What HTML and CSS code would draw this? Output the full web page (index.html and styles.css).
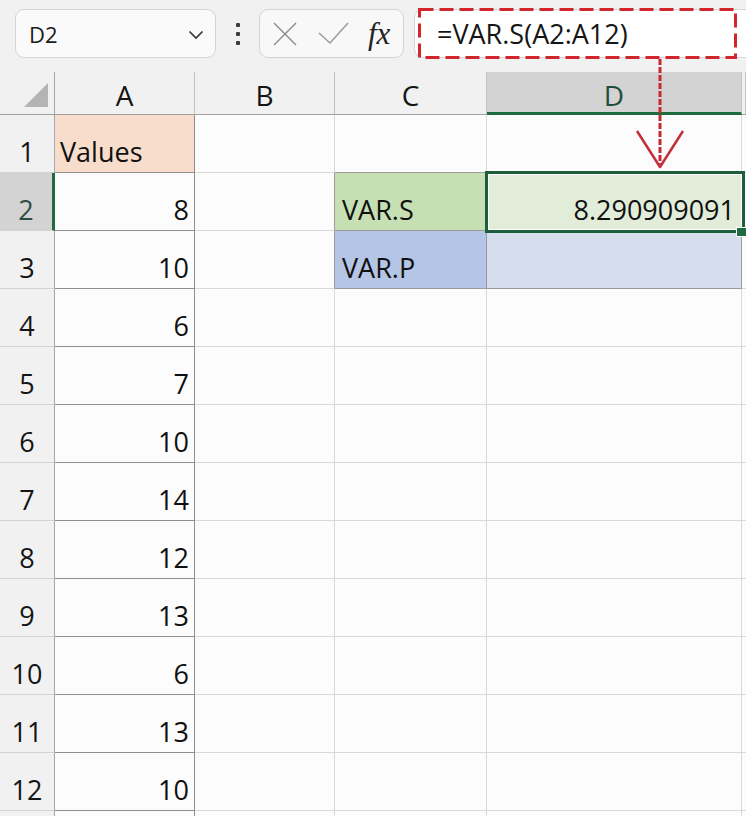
FILE: index.html
```html
<!DOCTYPE html>
<html>
<head>
<meta charset="utf-8">
<link rel="stylesheet" href="styles.css">
</head>
<body>
<div class="page">
  <div class="toolbar">
    <div class="namebox">
      <span class="name">D2</span>
      <svg class="chev" width="16" height="10" viewBox="0 0 16 10"><path d="M1.5 1.5 L8 8 L14.5 1.5" fill="none" stroke="#333" stroke-width="1.6"/></svg>
    </div>
    <div class="dots"><i></i><i></i><i></i></div>
    <div class="fxbox">
      <svg class="ico-x" width="24" height="24" viewBox="0 0 24 24"><path d="M1 1 L23 23 M23 1 L1 23" stroke="#8a8a8a" stroke-width="1.4" fill="none"/></svg>
      <svg class="ico-ok" width="31" height="22" viewBox="0 0 31 22"><path d="M1 11 L12 21 L30 1" stroke="#9a9a9a" stroke-width="1.4" fill="none"/></svg>
      <span class="fx">fx</span>
    </div>
    <div class="formula">=VAR.S(A2:A12)</div>
  </div>

  <div class="sheet">
    <div class="corner"><span class="tri"></span></div>
    <div class="ch">A</div>
    <div class="ch">B</div>
    <div class="ch">C</div>
    <div class="ch sel-h">D</div>
    <div class="ch"></div>

    <div class="rh">1</div>
    <div class="c a fill-peach">Values</div>
    <div class="c"></div>
    <div class="c dark-b"></div>
    <div class="c dark-b"></div>
    <div class="c"></div>

    <div class="rh sel-r">2</div>
    <div class="c a num">8</div>
    <div class="c dark-r"></div>
    <div class="c bx fill-green">VAR.S</div>
    <div class="c bx num fill-lgreen active">8.290909091<span class="selbox"></span><span class="handle"></span></div>
    <div class="c"></div>

    <div class="rh">3</div>
    <div class="c a num">10</div>
    <div class="c dark-r"></div>
    <div class="c bx fill-blue">VAR.P</div>
    <div class="c bx fill-lblue"></div>
    <div class="c"></div>

    <div class="rh">4</div><div class="c a num">6</div><div class="c"></div><div class="c"></div><div class="c"></div><div class="c"></div>
    <div class="rh">5</div><div class="c a num">7</div><div class="c"></div><div class="c"></div><div class="c"></div><div class="c"></div>
    <div class="rh">6</div><div class="c a num">10</div><div class="c"></div><div class="c"></div><div class="c"></div><div class="c"></div>
    <div class="rh">7</div><div class="c a num">14</div><div class="c"></div><div class="c"></div><div class="c"></div><div class="c"></div>
    <div class="rh">8</div><div class="c a num">12</div><div class="c"></div><div class="c"></div><div class="c"></div><div class="c"></div>
    <div class="rh">9</div><div class="c a num">13</div><div class="c"></div><div class="c"></div><div class="c"></div><div class="c"></div>
    <div class="rh">10</div><div class="c a num">6</div><div class="c"></div><div class="c"></div><div class="c"></div><div class="c"></div>
    <div class="rh">11</div><div class="c a num">13</div><div class="c"></div><div class="c"></div><div class="c"></div><div class="c"></div>
    <div class="rh">12</div><div class="c a num">10</div><div class="c"></div><div class="c"></div><div class="c"></div><div class="c"></div>
    <div class="rh"></div><div class="c a"></div><div class="c"></div><div class="c"></div><div class="c"></div><div class="c"></div>
  </div>

  <svg class="annot" width="746" height="816" viewBox="0 0 746 816">
    <rect x="419.5" y="9.5" width="316" height="48" fill="none" stroke="#d3262c" stroke-width="3" stroke-dasharray="14 6"/>
    <path d="M660 59 L660 164" stroke="#c42a30" stroke-width="3" stroke-dasharray="6 2" fill="none"/>
    <path d="M637 131 L660 167 L683 131" stroke="#c4303a" stroke-width="2.5" fill="none" stroke-linejoin="round"/>
  </svg>
</div>
</body>
</html>
```

FILE: styles.css
```css
* { box-sizing: border-box; }
html, body { margin: 0; padding: 0; overflow: hidden; }
body {
  width: 746px;
  height: 816px;
  background: #f1f1f1;
  font-family: "Open Sans", "Noto Sans", sans-serif;
  color: #111;
}
.page { position: relative; width: 746px; height: 816px; overflow: hidden; }

.toolbar {
  display: flex;
  align-items: flex-start;
  height: 72px;
  padding: 9px 0 0 15px;
  background: #f1f1f1;
}
.namebox {
  width: 201px;
  height: 49px;
  border: 1px solid #d4d4d4;
  border-radius: 9px;
  background: #fafafa;
  display: flex;
  align-items: center;
  justify-content: space-between;
  padding: 0 11px 0 13px;
}
.name { font-size: 22px; color: #1b1b1b; }
.chev { margin-top: 2px; }
.dots {
  width: 43px;
  height: 49px;
  display: flex;
  flex-direction: column;
  align-items: center;
  justify-content: center;
  gap: 5px;
}
.dots i { display: block; width: 4px; height: 4px; background: #3c3c3c; border-radius: 1px; }
.fxbox {
  width: 145px;
  height: 49px;
  border: 1px solid #d4d4d4;
  border-radius: 9px;
  background: #f8f8f8;
  display: flex;
  align-items: center;
  padding-left: 13px;
}
.ico-x { margin-right: 21px; }
.ico-ok { margin-right: 19px; margin-top: -2px; }
.fx {
  font-family: "Liberation Serif", "DejaVu Serif", serif;
  font-style: italic;
  font-size: 31px;
  color: #222;
  margin-top: 1px;
}
.formula {
  flex: 1;
  height: 49px;
  margin-left: 10px;
  background: #ffffff;
  border: 1px solid #d6d6d6;
  border-right: none;
  border-radius: 9px 0 0 9px;
  display: flex;
  align-items: center;
  padding-left: 22px;
  font-size: 27px;
  color: #151515;
}

.sheet {
  display: grid;
  grid-template-columns: 55px 140px 140px 152px 255px 4px;
  grid-template-rows: 43px repeat(13, 58px);
  background: #fcfcfc;
}
.corner, .ch {
  background: #f1f1f1;
  border-bottom: 1px solid #9f9f9f;
}
.corner {
  border-right: 1px solid #a8a8a8;
  display: flex;
  align-items: flex-end;
  padding: 0 0 7px 24px;
}
.tri {
  width: 0; height: 0;
  border-left: 24px solid transparent;
  border-bottom: 24px solid #b4b4b4;
}
.ch {
  border-right: 1px solid #c3c3c3;
  display: flex;
  justify-content: center;
  align-items: flex-end;
  font-size: 28px;
  line-height: 32px;
  padding-bottom: 3px;
  color: #151515;
}
.ch.sel-h {
  background: #d3d3d3;
  border-bottom: 3px solid #1e6b40;
  padding-bottom: 1px;
  color: #1f4f3a;
}
.rh {
  background: #f1f1f1;
  border-right: 1px solid #a8a8a8;
  border-bottom: 1px solid #d2d2d2;
  display: flex;
  justify-content: center;
  align-items: flex-end;
  font-size: 27px;
  line-height: 32px;
  padding-bottom: 4px;
  color: #151515;
}
.rh.sel-r {
  background: #d3d3d3;
  border-right: 3px solid #1e6b40;
  color: #2f4f42;
}
.c {
  border-right: 1px solid #d9d9d9;
  border-bottom: 1px solid #d9d9d9;
  display: flex;
  align-items: flex-end;
  padding: 0 5px 4px 5px;
  font-size: 27px;
  line-height: 32px;
  color: #101010;
  white-space: nowrap;
}
.c.a { border-right-color: #8e8e8e; border-bottom-color: #8e8e8e; }
.c.num { justify-content: flex-end; }
.c.dark-b { border-bottom-color: #9a9a9a; }
.c.dark-r { border-right-color: #9a9a9a; }
.c.bx { border-right-color: #9a9a9a; border-bottom-color: #9a9a9a; padding-left: 7px; }
.fill-peach { background: #f8ddcc; }
.fill-green { background: #c6dfb3; }
.fill-lgreen { background: #e1edd8; }
.fill-blue { background: #b4c5e5; }
.fill-lblue { background: #d6deee; }

.active { position: relative; }
.c.bx.num.active { padding-right: 6px; }
.selbox {
  position: absolute;
  left: -2px; top: -2px; right: -4px; bottom: -3px;
  border: 3px solid #1e5e3a;
  box-shadow: inset 0 0 0 1px #ffffff;
}
.handle {
  position: absolute;
  right: -5px; bottom: -6px;
  width: 9px; height: 8px;
  background: #1e6b40;
  box-shadow: 0 0 0 1px #ffffff;
}

.annot {
  position: absolute;
  left: 0; top: 0;
  pointer-events: none;
}
```
